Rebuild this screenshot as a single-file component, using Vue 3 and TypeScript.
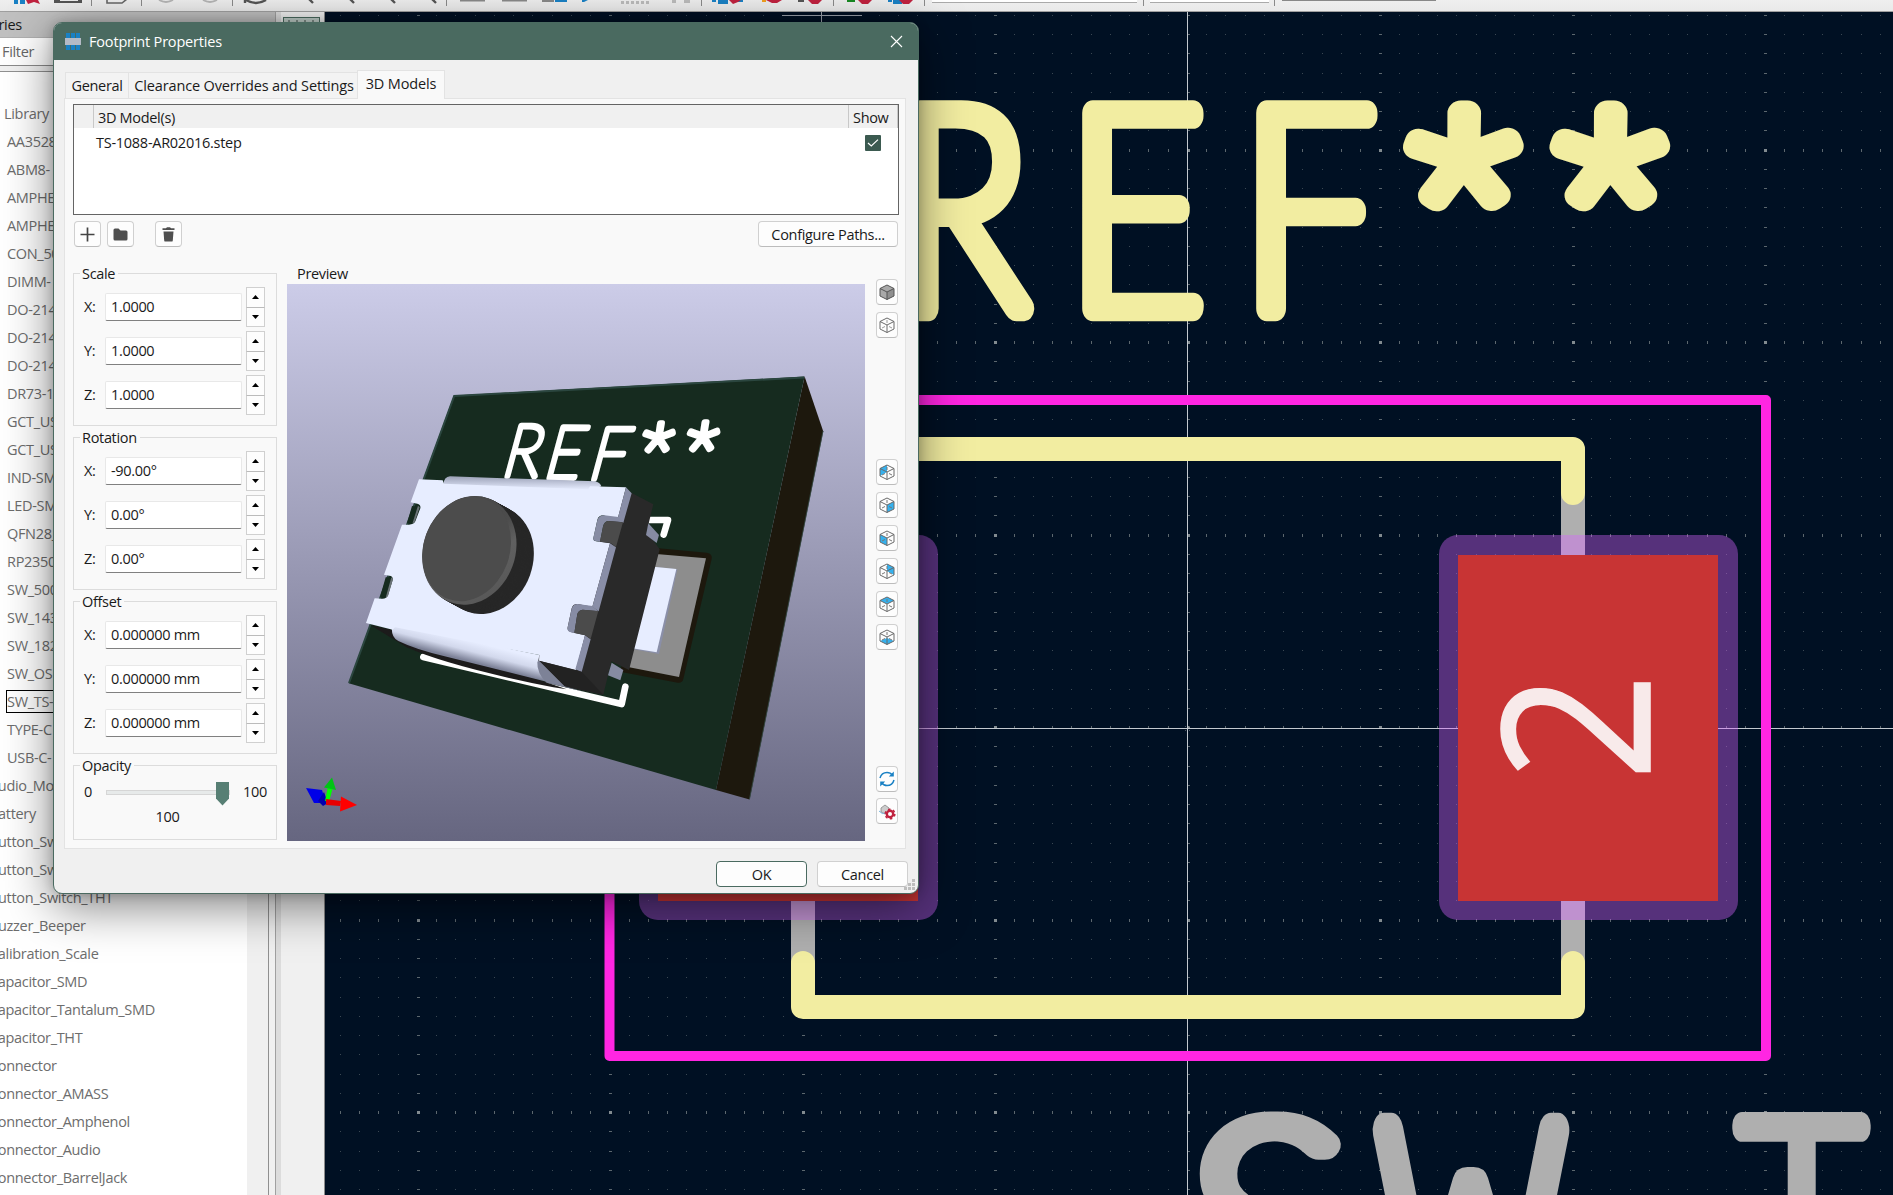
<script setup lang="ts">
interface Axis { label: string; value: string }
interface Group { title: string; rows: Axis[] }

const groups: Group[] = [
  { title: 'Scale', rows: [{ label: 'X:', value: '1.0000' }, { label: 'Y:', value: '1.0000' }, { label: 'Z:', value: '1.0000' }] },
  { title: 'Rotation', rows: [{ label: 'X:', value: '-90.00°' }, { label: 'Y:', value: '0.00°' }, { label: 'Z:', value: '0.00°' }] },
  { title: 'Offset', rows: [{ label: 'X:', value: '0.000000 mm' }, { label: 'Y:', value: '0.000000 mm' }, { label: 'Z:', value: '0.000000 mm' }] },
]

const parts: string[] = [
  'AA3528', 'ABM8-', 'AMPHE', 'AMPHE', 'CON_50', 'DIMM-', 'DO-214', 'DO-214', 'DO-214', 'DR73-1', 'GCT_US', 'GCT_US',
  'IND-SM', 'LED-SM', 'QFN28_', 'RP2350', 'SW_500', 'SW_143', 'SW_182', 'SW_OS', 'SW_TS-', 'TYPE-C', 'USB-C-',
]
const libraries: string[] = [
  'Audio_Mo', 'Battery', 'Button_Sw', 'Button_Sw', 'Button_Switch_THT', 'Buzzer_Beeper', 'Calibration_Scale',
  'Capacitor_SMD', 'Capacitor_Tantalum_SMD', 'Capacitor_THT', 'Connector', 'Connector_AMASS', 'Connector_Amphenol',
  'Connector_Audio', 'Connector_BarrelJack',
]

// Canvas grid: every tenth row and column carries a longer tick.
let minor = ''
let ticks = ''
let majors = ''
for (let i = -25; i <= 57; i++) {
  const x = Math.floor(802.3 + i * 19.25)
  if (x < 325) continue
  for (let j = -37; j <= 24; j++) {
    const y = Math.floor(727.6 + j * 19.25)
    if (y < 12 || y > 1194) continue
    const mx = i % 10 === 0
    const my = j % 10 === 0
    if (mx && my) majors += `M${x} ${y - 1}h3v3h-3z`
    else if (mx) ticks += `M${x} ${y}h3v1h-3z`
    else if (my) ticks += `M${x} ${y - 1}h1v3h-1z`
    else minor += `M${x} ${y}h1v1h-1z`
  }
}

const capSteps = Array.from({ length: 16 }, (_, i) => i / 15)

const cubeFaces: Record<string, string> = {
  left: '1,4.5 8,1 8,8 1,12',
  right: '8,8 15,4.5 15,12 8,15.5',
  front: '1,4.5 8,8 8,15.5 1,12',
  back: '8,1 15,4.5 15,12 8,8',
  top: '1,4.5 8,1 15,4.5 8,8',
  bottom: '1,12 8,9 15,12 8,15.5',
}
const views: string[] = ['left', 'right', 'front', 'back', 'top', 'bottom']
</script>

<template>
  <div class="app">
    <div class="toolbar">
      <svg width="1893" height="11" viewBox="0 0 1893 11">
        <g fill="#8a8a8a"><path d="M91 0h1v6h-1zM141 0h1v6h-1zM232 0h1v6h-1zM446 0h1v6h-1zM701 0h1v6h-1zM833 0h1v6h-1zM924 0h1v6h-1zM1143 0h1v6h-1zM1274 0h1v6h-1z" /></g>
        <path d="M14 0h4v4h-4zM20 0h5v4h-5z" fill="#1a81c4" /><path d="M26 0h12l2 4-6-2-6 2z" fill="#c0223f" />
        <path d="M54 0h28v3H54z" fill="#545454" /><path d="M60 0h18v1H60z" fill="#eee" />
        <path d="M107 0v3h15l5-4" fill="none" stroke="#666" stroke-width="1.6" />
        <path d="M159 0q7 4 14 0M203 0q7 4 14 0" fill="none" stroke="#b5b5b5" stroke-width="2" />
        <path d="M246 0q10 6 20 0M245 3v-3" fill="none" stroke="#545454" stroke-width="2.4" />
        <path d="M309 -1l4 4M350 -1l4 4M391 -1l4 4M432 -1l4 4" stroke="#545454" stroke-width="2.4" />
        <path d="M460 0h25v1.6h-25zM502 0h25v1.6h-25zM542 0h12v2h-12z" fill="#888" /><path d="M555 0h12v2h-12zM582 0h6l-4 2h-2z" fill="#1a81c4" />
        <path d="M621 2.5h30" stroke="#bbb" stroke-width="3" stroke-dasharray="3 2" /><path d="M672 0h4v3h-4zM684 0h6v3h-6z" fill="#bbb" />
        <path d="M712 0h4v2h-4zM718 0h10v4h-10zM734 0h9v2h-9zM888 0h4v2h-4zM893 0h9v4h-9z" fill="#1a81c4" />
        <path d="M729 0h12l-3 2-5 2zM766 0h16l-5 3h-5zM808 0h14l-4 4h-6zM858 0h14l-4 4h-6zM899 0h14l-4 4h-6z" fill="#c0223f" />
        <path d="M762 0h4v2h-4z" fill="#f2a01f" /><path d="M798 0h6v2h-6z" fill="#555" /><path d="M847 0h8v2h-8z" fill="#178a23" />
        <path d="M932 0h205v2h-205zM1150 0h119v2h-119z" fill="#fff" /><path d="M932 2h205v1h-205zM1150 2h119v1h-119z" fill="#aaa" /><path d="M1282 0h154v1h-154z" fill="#888" />
      </svg>
    </div>

    <div class="workspace">
      <aside class="library-pane">
        <div class="pane-title"><span>Libraries</span></div>
        <div class="filter">Filter</div>
        <div class="tree-wrap">
          <div class="tree">
            <div class="node head">Library</div>
            <div v-for="(p, i) in parts" :key="'p' + i" class="node part"><span :class="{ current: p === 'SW_TS-' }">{{ p }}</span></div>
            <div v-for="(l, i) in libraries" :key="'l' + i" class="node lib">{{ l }}</div>
          </div>
          <div class="scrollbar"></div>
        </div>
      </aside>
      <div class="side-strip"><div class="strip-button"><svg width="35" height="8"><path d="M4 3h2M12 3h2M20 3h2M28 3h2M8 6h1M16 6h1M24 6h1" stroke="#40504b" /></svg></div></div>

      <svg class="board" width="1568" height="1183" viewBox="325 12 1568 1183">
        <defs>
          <clipPath id="w-shape"><path d="M1340 1090H1440V1195H1340zM1505 1090H1620V1195H1505zM1451 1195L1456 1178Q1459 1167 1470.500 1167T1485 1178L1490 1195z" /></clipPath>
          <filter id="widen" x="-20%" y="-20%" width="140%" height="140%" color-interpolation-filters="sRGB"><feMorphology operator="dilate" radius="3 0" /></filter>
        </defs>
        <rect x="325" y="12" width="1568" height="1183" fill="#001023" />
        <g shape-rendering="crispEdges">
          <path :d="minor" fill="#3b4853" />
          <path :d="ticks" fill="#5c676e" />
          <path :d="majors" fill="#828b90" />
          <path d="M1187 12h1v1183h-1zM325 728h1568v1h-1568z" fill="#c3c9cf" />
          <path d="M821 12h1v20h-1zM782 15h80v1h-80z" fill="#9ba1ab" />
          <path d="M1185 726h1v1h-1zM1189 726h1v1h-1zM1185 730h1v1h-1zM1189 730h1v1h-1z" fill="#4a5662" />
        </g>
        <g fill="none">
          <path d="M803 480V976M1573 480V976" stroke="#afafaf" stroke-width="24" />
          <path d="M803 493V449H1573V493M803 963V1007H1573V963" stroke="#f2eda1" stroke-width="24" stroke-linecap="round" stroke-linejoin="round" />
        </g>
        <g fill="#d864ff" fill-opacity="0.4">
          <rect x="639" y="535" width="299" height="385" rx="19" />
          <rect x="1439" y="535" width="299" height="385" rx="19" />
        </g>
        <g fill="#c83434">
          <rect x="658" y="555" width="260" height="346" />
          <rect x="1458" y="555" width="260" height="346" />
        </g>
        <rect x="609.5" y="400" width="1156.5" height="656" fill="none" stroke="#ff26e2" stroke-width="10" stroke-linejoin="round" />
        <text class="pad-number" transform="translate(1650 781) rotate(-90) scale(.92 1)" fill="#f8eaea" stroke="#f8eaea">2</text>
        <g class="stroke-font" fill="#f2eda1" stroke="#f2eda1" stroke-width="24.500">
          <g filter="url(#widen)">
            <text transform="translate(898 308.500) scale(.81 1.042)">R</text>
            <text transform="translate(1069 308.500) scale(.86 1.042)">E</text>
            <text transform="translate(1243 308.500) scale(.86 1.042)">F</text>
          </g>
          <text class="star" stroke-width="26" transform="translate(1463 270) scale(1.04 .96)">*</text>
          <text class="star" stroke-width="26" transform="translate(1609.500 270) scale(1.04 .96)">*</text>
        </g>
        <g class="stroke-font center" fill="#afafaf" stroke="#afafaf" stroke-width="25" filter="url(#widen)">
          <text transform="translate(1270 1328) scale(1.13 1.07)">S</text>
          <g clip-path="url(#w-shape)"><text transform="translate(1471 1331) scale(.67 1.07)" stroke-width="33">W</text></g>
          <text transform="translate(1801.500 1326) scale(.78 1.07)">T</text>
        </g>
      </svg>
    </div>

    <section class="dialog">
      <header class="titlebar">
        <svg width="16" height="17" viewBox="0 0 16 17"><path d="M1 0h4v17H1zM6 0h4v17H6zM11 0h4v17h-4z" fill="#1a81c4" /><path d="M0 5h16v7H0z" fill="#b4bac6" /></svg>
        <span class="title">Footprint Properties</span>
        <svg class="close" width="13" height="13" viewBox="0 0 13 13"><path d="M1 1l11 11M12 1L1 12" stroke="#fff" stroke-width="1.1" /></svg>
      </header>

      <div class="content">
        <nav class="tabs">
          <div class="tab t1">General</div>
          <div class="tab t2">Clearance Overrides and Settings</div>
          <div class="tab t3 active">3D Models</div>
        </nav>
        <div class="page">
          <div class="grid">
            <div class="grid-head"><span class="c0"></span><span class="c1">3D Model(s)</span><span class="c2">Show</span></div>
            <div class="grid-row">
              <span class="file">TS-1088-AR02016.step</span>
              <svg class="check" width="16" height="16" viewBox="0 0 16 16"><rect width="16" height="16" rx="1" fill="#3b5a50" /><path d="M3 8l3.300 3L13 4.600" fill="none" stroke="#fff" stroke-width="1.2" /></svg>
            </div>
          </div>

          <div class="actions">
            <button class="tool"><svg width="15" height="15" viewBox="0 0 15 15"><path d="M7.5 .5v14M.5 7.5h14" stroke="#444" stroke-width="1.7" /></svg></button>
            <button class="tool"><svg width="15" height="13" viewBox="0 0 15 13"><path d="M.5 2Q.5.5 2 .5H5.5L7.5 2.5H13Q14.5 2.5 14.5 4V11Q14.5 12.5 13 12.5H2Q.5 12.5.5 11z" fill="#4f4f4f" /></svg></button>
            <button class="tool trash"><svg width="13" height="15" viewBox="0 0 13 15"><path d="M.5 1.2H4L5 .2H8L9 1.2H12.5V3H.5zM1.5 4.4H11.5L10.8 13.4Q10.7 14.6 9.5 14.6H3.5Q2.3 14.6 2.2 13.4z" fill="#4f4f4f" /></svg></button>
            <button class="paths">Configure Paths...</button>
          </div>

          <div class="columns">
            <div class="settings">
              <div v-for="g in groups" :key="g.title" class="group">
                <span class="legend">{{ g.title }}</span>
                <div v-for="r in g.rows" :key="r.label" class="row">
                  <label>{{ r.label }}</label>
                  <div class="field">{{ r.value }}</div>
                  <div class="spin"><i><svg width="7" height="4"><path d="M0 4h7L3.5 0z" /></svg></i><i><svg width="7" height="4"><path d="M0 0h7L3.5 4z" /></svg></i></div>
                </div>
              </div>
              <div class="group opacity">
                <span class="legend">Opacity</span>
                <div class="slider">
                  <span class="min">0</span>
                  <svg width="124" height="24" viewBox="0 0 124 24"><rect x=".5" y="8.5" width="123" height="4" fill="#e7eaea" stroke="#d6d6d6" /><path d="M110 0h13v16.5L116.500 23.500 110 16.500z" fill="#577f74" /></svg>
                  <span class="max">100</span>
                </div>
                <div class="current-value">100</div>
              </div>
            </div>

            <div class="preview">
              <span class="preview-label">Preview</span>
              <svg class="scene" width="578" height="557" viewBox="287 284 578 557">
                <defs>
                  <linearGradient id="sky" x1="0" y1="0" x2="0" y2="1"><stop offset="0" stop-color="#cccce8" /><stop offset="1" stop-color="#666680" /></linearGradient>
                  <linearGradient id="roll" gradientUnits="userSpaceOnUse" x1="390" y1="602" x2="375" y2="660"><stop offset="0" stop-color="#e7edff" /><stop offset=".5" stop-color="#d2d8ec" /><stop offset="1" stop-color="#7d8298" /></linearGradient>
                  <linearGradient id="lip" gradientUnits="userSpaceOnUse" x1="0" y1="110" x2="0" y2="145"><stop offset="0" stop-color="#9da3b8" /><stop offset="1" stop-color="#dfe5f8" /></linearGradient>
                  <linearGradient id="rim" x1="0" y1="0" x2="1" y2="1"><stop offset="0" stop-color="#474747" /><stop offset=".45" stop-color="#4c4c4c" /><stop offset=".6" stop-color="#606060" /><stop offset="1" stop-color="#545454" /></linearGradient>
                  <linearGradient id="wall" x1="0" y1="0" x2=".4" y2="1"><stop offset="0" stop-color="#181818" /><stop offset="1" stop-color="#2b2b2b" /></linearGradient>
                </defs>
                <rect x="287" y="284" width="578" height="557" fill="url(#sky)" />
                <path d="M804.600 376.600L823.200 431.200 749.600 799.500 716 790z" fill="#1d180d" />
                <path d="M453.900 395.400L804.600 376.600 716 790 348.700 683.300z" fill="#162b1f" />
                <path d="M349 683L454.200 396 804 377.500" fill="none" stroke="#2b463f" stroke-width="2" />
                <path d="M823 431L749.500 799" stroke="#344a44" fill="none" stroke-width=".8" />
                <g class="silk-3d" fill="#fff" stroke="#fff">
                  <text transform="matrix(.86 .01 -.27 1 500 476)">R</text>
                  <text transform="matrix(.86 .01 -.27 1 542 477.500)">E</text>
                  <text transform="matrix(.88 0 -.27 1 586.500 478.500)">F</text>
                  <text class="star" transform="matrix(1 -.02 -.15 1 653 473)">*</text>
                  <text class="star" transform="matrix(1 -.02 -.15 1 697.500 472)">*</text>
                </g>
                <g transform="translate(340 440) scale(.33333)">
                  <path d="M925 240H984L971 284M250 651L845 792 856 740" fill="none" stroke="#fff" stroke-width="20" stroke-linejoin="round" stroke-linecap="round" />
                  <path d="M940 323L1100 338Q1118 341 1115 357L1030 717Q1027 730 1013 728L840 695z" fill="#1d180d" />
                  <path d="M940 341L1098 355 1017 711 860 680z" fill="#8d8d8d" />
                  <path d="M940 380L1012 388 957 642 877 627z" fill="#8a8fa8" />
                  <path d="M940 380L1009 387 950 637 877 625z" fill="#e7edff" />
                  <path d="M92 556L158 570 680 748 640 742Q330 680 200 622z" fill="#1c1b1b" />
                  <path d="M858 150L940 193 920 275 959 328 867 690 814 664 790 764 672 740 590 660z" fill="#292929" />
                  <path d="M925 250L957 285 950 309 918 285z" fill="#868ba2" />
                  <path d="M815 668L850 690 841 721 804 706z" fill="#868ba2" />
                  <path d="M157 552Q150 590 175 603Q230 630 320 650L620 725 735 757 672 738 595 662 598 645z" fill="url(#roll)" />
                  <path d="M310 134Q312 110 330 109L765 124Q780 127 784 139L745 152z" fill="url(#lip)" />
                  <path d="M237 118L308 121 312 131 745 148 750 139 858 142 832 240 790 226Q775 226 772 240L760 295Q759 303 768 304L810 310 757 500 712 492Q698 492 695 505L683 562Q681 572 692 576L735 586 708 690 597 662 598 645 165 562 158 569 78 549 104 475 125 476Q140 477 144 466L158 420Q160 408 148 407L132 404 186 254 207 254Q221 254 226 244L241 205Q243 194 232 191L212 187z" fill="#e7edff" />
                  <path d="M216 198L234 200 218 250 201 250zM137 412L154 412 138 472 120 472z" fill="#162b1f" />
                  <path d="M234 197L239 202 224 246 217 251zM154 412L159 417 144 468 137 473z" fill="#6b7377" />
                  <path d="M858 142L875 160 850 248 832 240zM810 310L828 322 776 514 757 500zM735 586L752 598 725 696 706 688z" fill="#898ea7" />
                  <path d="M793 226L835 231 851 247 805 243Q792 245 789 260L780 305 767 303Q758 301 760 293L772 241Q777 226 793 226z" fill="#878ca4" />
                  <path d="M849 247L805 243Q792 245 789 260L780 305 812 309 828 321z" fill="#4b4b4b" />
                  <path d="M713 492L757 498 775 514 728 509Q716 510 712 522L703 579 690 576Q680 572 683 562L695 506Q699 492 713 492z" fill="#878ca4" />
                  <path d="M775 513L728 509Q716 510 712 522L703 579 736 586 752 597z" fill="#4b4b4b" />
                  <path d="M597 662L725 695 790 764 672 738z" fill="#222" />
                  <path d="M597 662L675 740 735 756 620 728Q590 700 592 665z" fill="#7d8297" />
                  <g v-for="t in capSteps" :key="t"><ellipse rx="138" ry="166" :transform="`translate(${440 - 50 * t} ${359 - 27 * t}) rotate(20)`" fill="#272727" /></g>
                  <ellipse rx="138" ry="166" transform="translate(388 331) rotate(20)" fill="url(#rim)" />
                  <ellipse rx="129" ry="160" transform="translate(380 327) rotate(20)" fill="#4c4c4c" />
                </g>
                <path d="M306 788l16 2 4 13-12 0z" fill="#0000e8" /><path d="M318 801l6-9 4 11-5 3z" fill="#0000b0" />
                <path d="M325 801l3-15 5 1-4 15z" fill="#0f0" /><path d="M332 777.500L336 790 324 787.500z" fill="#00c414" />
                <path d="M326 799l15 2-1 5-14-1z" fill="#e80000" /><path d="M341 796.500L357 805 340 811.500z" fill="#f00" />
              </svg>
            </div>

            <div class="view-tools">
              <button class="vt"><svg width="18" height="18" viewBox="-1 -1 18 18"><path d="M8 1l7 3.500V12l-7 3.500L1 12V4.500z" fill="#a9a9a9" /><path d="M8 8l7-3.500V12l-7 3.500z" fill="#8f8f8f" /><path d="M8 1l7 3.500V12l-7 3.500L1 12V4.500zM1 4.500L8 8l7-3.500M8 8v7.500" fill="none" stroke="#555" /></svg></button>
              <button class="vt gap-lg"><svg width="18" height="18" viewBox="-1 -1 18 18"><path d="M8 1l7 3.500V12l-7 3.500L1 12V4.500zM1 4.500L8 8l7-3.500M8 8v7.500" fill="none" stroke="#6a6a6a" /><path d="M8 3v3M3 11l3-1.500M13 11l-3-1.500" stroke="#999" /></svg></button>
              <button v-for="v in views" :key="v" class="vt"><svg width="18" height="18" viewBox="-1 -1 18 18"><polygon :points="cubeFaces[v]" fill="#35b1ee" /><path d="M8 1l7 3.500V12l-7 3.500L1 12V4.500zM1 4.500L8 8l7-3.500M8 8v7.500" fill="none" stroke="#6a6a6a" /><path d="M8 3v3M3 11l3-1.500M13 11l-3-1.500" stroke="#777" /></svg></button>
              <button class="vt refresh"><svg width="18" height="18" viewBox="0 0 18 18"><path d="M2 8Q3.500 2.500 9 2.500q3.500 0 5.500 2.800M16 10q-1.500 5.500-7 5.500-3.500 0-5.500-2.800" fill="none" stroke="#1a81c4" stroke-width="1.500" /><path d="M15.800 1.500v5h-5zM2.200 16.500v-5h5z" fill="#1a81c4" /></svg></button>
              <button class="vt last"><svg width="18" height="18" viewBox="0 0 18 18"><path d="M3 6l4-3 4 3v4l-4 2-4-2z" fill="#ccc" stroke="#888" stroke-width=".8" /><path d="M1 9q3 4 7 2" fill="none" stroke="#7ab6dd" /><circle cx="12" cy="12" r="3.200" fill="#fff" stroke="#c0223f" stroke-width="2.400" /><circle cx="12" cy="12" r="4.800" fill="none" stroke="#c0223f" stroke-width="1.600" stroke-dasharray="2.500 2.500" /></svg></button>
            </div>
          </div>
        </div>

        <footer class="buttons"><button class="ok">OK</button><button>Cancel</button></footer>
      </div>
      <svg class="grip" width="11" height="11"><path d="M8 0h3v3h-3zM4 4h3v3h-3zM8 4h3v3h-3zM0 8h3v3h-3zM4 8h3v3h-3zM8 8h3v3h-3z" fill="#bdbdbd" /></svg>
    </section>
  </div>
</template>

<style>
body { margin: 0; overflow: hidden; }
</style>

<style scoped>
.app { position: relative; width: 1893px; height: 1195px; overflow: hidden; background: #f0f0f0; display: flex; flex-direction: column; font: 14.5px/20px 'Open Sans', 'Noto Sans', sans-serif; letter-spacing: -0.32px; color: #1a1a1a; }
.app * { box-sizing: border-box; }
svg { display: block; }
button { font: inherit; letter-spacing: inherit; color: inherit; padding: 0; background: #fdfdfd; border: 1px solid #d0d0d0; border-bottom-color: #bcbcbc; border-radius: 4px; display: flex; align-items: center; justify-content: center; }
.toolbar { height: 12px; flex: none; border-bottom: 1px solid #9f9f9f; background: linear-gradient(#efefef, #e9e9e9); }
.workspace { display: flex; flex: 1; min-height: 0; }
.library-pane { width: 276px; flex: none; display: flex; flex-direction: column; border-right: 1px solid #a0a0a0; }
.pane-title { height: 26px; background: #c0c0c0; overflow: hidden; line-height: 25px; border-bottom: 1px solid #b0b0b0; }
.pane-title span { margin-left: -34px; }
.filter { height: 28px; background: #fff; border-bottom: 1px solid #8a8a8a; line-height: 27px; padding-left: 2px; color: #666; }
.tree-wrap { margin-top: 5px; flex: 1; min-height: 0; display: flex; border-top: 1px solid #909090; border-right: 1px solid #909090; margin-right: 6px; }
.tree { flex: 1; min-width: 0; background: #fff; padding-top: 28px; overflow: hidden; color: #6d6d6d; }
.scrollbar { width: 21px; background: #f0f0f0; }
.node { height: 28px; line-height: 28px; white-space: nowrap; }
.head { padding-left: 4px; }
.part { padding-left: 7px; }
.lib { margin-left: -11px; }
.current { display: inline-block; line-height: 21px; height: 23px; border: 1px solid #000; margin-left: -1px; width: 90px; }
.side-strip { width: 49px; flex: none; background: #f0f0f0; border-left: 5px solid #dcdcdc; border-right: 1px solid #8c8c8c; padding: 5px 0 0 2px; }
.strip-button { width: 37px; height: 36px; border: 1px solid #4a6b60; background: #c0cfca; }
.board { flex: none; }
.pad-number { font: 206px 'Open Sans', sans-serif; letter-spacing: 0; stroke-width: 1.5px; }
.stroke-font { font: 100 268px Lato, sans-serif; letter-spacing: 0; stroke-linejoin: round; stroke-linecap: round; }
.center { text-anchor: middle; }
.star { font: 100 230px Roboto, sans-serif; text-anchor: middle; }
.silk-3d { font: 100 72px Lato, sans-serif; letter-spacing: 0; stroke-width: 6px; stroke-linejoin: round; }
.silk-3d .star { font-size: 70px; }

.dialog { position: absolute; left: 53px; top: 22px; width: 866px; height: 872px; border: 1px solid #4a6a60; border-radius: 9px; background: #f0f0f0; overflow: hidden; display: flex; flex-direction: column; box-shadow: 0 12px 48px rgba(0, 0, 0, 0.5), 0 0 12px rgba(0, 0, 0, 0.2); }
.titlebar { height: 37px; flex: none; background: #4a6a60; display: flex; align-items: center; color: #fff; padding: 0 15px 0 11px; }
.title { margin-left: 8px; flex: 1; letter-spacing: -0.18px; }
.content { flex: 1; display: flex; flex-direction: column; padding: 10px 12px 6px 10px; }
.tabs { display: flex; align-items: flex-end; height: 28px; padding-left: 2px; }
.tab { height: 26px; border: 1px solid #e3e3e3; border-bottom: 0; background: #f3f3f3; line-height: 26px; text-align: center; white-space: nowrap; margin-left: -1px; }
.t1 { width: 64px; }
.t2 { width: 230px; letter-spacing: -0.14px; padding-left: 2px; }
.t3 { width: 88px; letter-spacing: -0.14px; }
.tab.active { height: 29px; background: #f9f9f9; margin-bottom: -1px; position: relative; line-height: 26px; }
.page { height: 751px; border: 1px solid #e3e3e3; background: #f9f9f9; padding: 5px 6px 0 8px; display: flex; flex-direction: column; }
.grid { height: 111px; border: 1px solid #646464; background: #fff; }
.grid-head { display: flex; height: 23px; background: #f0f0f0; line-height: 26px; }
.c0 { width: 20px; border-right: 1px solid #c8c8c8; }
.c1 { flex: 1; padding-left: 4px; border-right: 1px solid #c8c8c8; }
.c2 { width: 49px; padding-left: 4px; border-right: 1px solid #c8c8c8; }
.grid-row { display: flex; align-items: center; height: 29px; padding: 0 17px 0 22px; justify-content: space-between; }
.file { letter-spacing: -0.27px; }
.actions { display: flex; margin-top: 6px; padding: 0 1px; gap: 6px; }
.tool { width: 27px; height: 26px; }
.trash { margin-left: 15px; }
.paths { margin-left: auto; width: 140px; height: 26px; padding-top: 1px; }
.columns { display: flex; margin-top: 26px; }
.settings { width: 204px; display: flex; flex-direction: column; gap: 11px; }
.group { position: relative; height: 153px; border: 1px solid #dcdcdc; padding: 13px 11px 0 10px; display: flex; flex-direction: column; gap: 4px; }
.legend { position: absolute; left: 6px; top: -10px; background: #f9f9f9; padding: 0 3px 0 2px; line-height: 20px; }
.row { display: flex; height: 40px; align-items: center; }
.row label { width: 21px; flex: none; }
.field { width: 137px; flex: none; height: 28px; background: #fff; border: 1px solid #e8e8e8; border-bottom-color: #808080; border-radius: 2px; line-height: 25px; padding-left: 5px; }
.spin { margin-left: 4px; flex: none; width: 19px; height: 40px; display: flex; flex-direction: column; }
.spin i { flex: 1; border: 1px solid #d0d0d0; background: #fdfdfd; display: flex; align-items: center; justify-content: center; }
.spin i + i { margin-top: -1px; border-top-color: #bbb; }
.opacity { height: 75px; gap: 0; padding-top: 16px; }
.slider { display: flex; height: 24px; }
.slider > * { flex: none; }
.min { width: 22px; }
.max { margin-left: 13px; }
.current-value { text-align: center; margin-top: 1px; padding-right: 14px; }
.preview { margin-left: 10px; display: flex; flex-direction: column; margin-top: -10px; }
.preview-label { padding-left: 10px; height: 21px; line-height: 22px; }
.view-tools { margin-left: 11px; padding-top: 6px; display: flex; flex-direction: column; gap: 7px; }
.vt { width: 22px; height: 26px; }
.gap-lg { margin-bottom: 114px; }
.refresh { margin-top: 109px; }
.last { margin-top: -1px; }
.buttons { display: flex; justify-content: flex-end; gap: 10px; margin-top: 12px; margin-right: -2px; }
.buttons button { width: 91px; height: 26px; padding-top: 1px; }
.buttons .ok { border-color: #4a6a60; }
.grip { position: absolute; right: 3px; bottom: 3px; }
</style>
